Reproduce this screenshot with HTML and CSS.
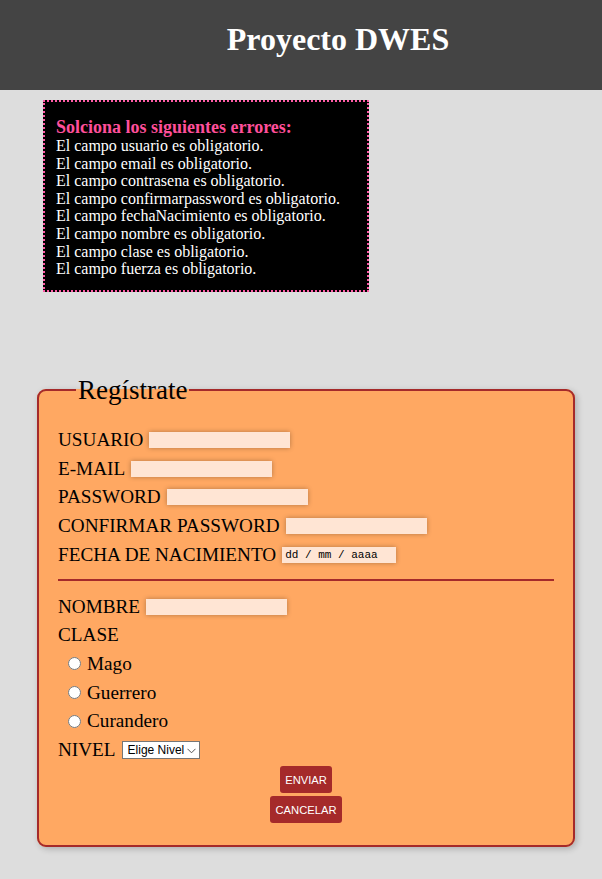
FILE: index.html
```html
<!DOCTYPE html>
<html lang="es">
<head>
<meta charset="utf-8">
<title>Proyecto DWES</title>
<link rel="stylesheet" href="styles.css">
</head>
<body>
<header class="site-header">
  <h1 class="site-title">Proyecto DWES</h1>
</header>

<div class="errors">
  <h3 class="errors-title">Solciona los siguientes errores:</h3>
  <div class="error-line">El campo usuario es obligatorio.</div>
  <div class="error-line">El campo email es obligatorio.</div>
  <div class="error-line">El campo contrasena es obligatorio.</div>
  <div class="error-line">El campo confirmarpassword es obligatorio.</div>
  <div class="error-line">El campo fechaNacimiento es obligatorio.</div>
  <div class="error-line">El campo nombre es obligatorio.</div>
  <div class="error-line">El campo clase es obligatorio.</div>
  <div class="error-line">El campo fuerza es obligatorio.</div>
</div>

<form class="register">
  <fieldset class="register-box">
    <legend class="register-legend">Regístrate</legend>
    <div class="row"><label for="usuario">USUARIO</label><input class="field" type="text" id="usuario"></div>
    <div class="row"><label for="email">E-MAIL</label><input class="field" type="text" id="email"></div>
    <div class="row"><label for="password">PASSWORD</label><input class="field" type="password" id="password"></div>
    <div class="row"><label for="confirm">CONFIRMAR PASSWORD</label><input class="field" type="password" id="confirm"></div>
    <div class="row"><label for="fecha">FECHA DE NACIMIENTO</label><input class="field date" type="text" id="fecha" placeholder="dd / mm / aaaa"></div>
    <hr class="divider">
    <div class="row"><label for="nombre">NOMBRE</label><input class="field" type="text" id="nombre"></div>
    <div class="row"><span>CLASE</span></div>
    <div class="row radio-row"><input type="radio" name="clase" id="mago"><label for="mago">Mago</label></div>
    <div class="row radio-row"><input type="radio" name="clase" id="guerrero"><label for="guerrero">Guerrero</label></div>
    <div class="row radio-row"><input type="radio" name="clase" id="curandero"><label for="curandero">Curandero</label></div>
    <div class="row"><label for="nivel">NIVEL</label>
      <span class="select-wrap">
        <select id="nivel" class="select"><option>Elige Nivel</option></select>
        <svg class="chev" width="9" height="6" viewBox="0 0 9 6"><path d="M0.5 0.8 L4.5 4.8 L8.5 0.8" fill="none" stroke="#555" stroke-width="1"/></svg>
      </span>
    </div>
    <div class="actions">
      <button type="submit" class="btn">ENVIAR</button>
      <button type="reset" class="btn">CANCELAR</button>
    </div>
  </fieldset>
</form>
</body>
</html>
```

FILE: styles.css
```css
html, body {
  margin: 0;
  padding: 0;
}
body {
  background: #dddddd;
  font-family: "Liberation Serif", "Times New Roman", serif;
  color: #000;
}
.site-header {
  background: #444444;
  height: 90px;
  padding-left: 74px;
  box-sizing: border-box;
  overflow: hidden;
}
.site-title {
  margin: 21px 0 0;
  text-align: center;
  color: #ffffff;
  font-size: 32px;
  font-weight: bold;
}
.errors {
  margin: 10px 0 0 43px;
  width: 326px;
  box-sizing: border-box;
  background: #000;
  border: 2px dotted #ff5aa5;
  padding: 15px 11px 12px;
  color: #fff;
  font-size: 16px;
}
.errors-title {
  margin: 0 0 -1px;
  color: #ff4f9a;
  font-size: 18px;
  font-weight: bold;
}
.error-line {
  line-height: 17.6px;
}
.register {
  margin: 83px 27px 0 37px;
  padding-bottom: 31px;
}
.register-box {
  margin: 0;
  border: 2px solid #a52a2a;
  border-radius: 9px;
  background: #ffa862;
  padding: 20px 19px 22px;
  box-shadow: 2px 2px 6px rgba(0,0,0,0.22);
}
.register-legend {
  margin-left: 18px;
  padding: 0 2px;
  font-size: 27px;
}
.row {
  display: flex;
  align-items: center;
  gap: 6px;
  height: 28.7px;
  font-size: 19.2px;
}
.field {
  width: 141px;
  height: 16px;
  box-sizing: border-box;
  border: none;
  background: #ffe5d4;
  box-shadow: 0 0 5px rgba(0,0,0,0.3);
  padding: 0 3px;
  font-size: 13px;
}
.date {
  width: 114px;
  font-family: "Liberation Mono", "Courier New", monospace;
  font-size: 11px;
}
.date::placeholder {
  color: #000;
}
.divider {
  border: none;
  height: 2px;
  background: #a52a2a;
  margin: 10px 0 11px;
}
.radio-row {
  gap: 0;
  padding-left: 5px;
}
.radio-row input {
  margin: 0 6px 0 5px;
  width: 13px;
  height: 13px;
}
.select-wrap {
  position: relative;
  display: inline-block;
  height: 18px;
}
.select {
  appearance: none;
  -webkit-appearance: none;
  width: 78px;
  height: 18px;
  box-sizing: border-box;
  border: 1px solid #767676;
  border-radius: 0;
  background: #fff;
  padding: 0 0 0 5px;
  font-family: "Liberation Sans", Arial, sans-serif;
  font-size: 12px;
  color: #000;
  display: block;
}
.chev {
  position: absolute;
  right: 4px;
  top: 7px;
  pointer-events: none;
}
.actions {
  display: flex;
  flex-direction: column;
  align-items: center;
  gap: 3px;
  margin-top: 2px;
}
.btn {
  background: #a52a2a;
  color: #fff;
  border: none;
  border-radius: 3px;
  font-family: "Liberation Sans", Arial, sans-serif;
  font-size: 11.2px;
  line-height: 14px;
  padding: 6.5px 5.5px;
  margin: 0;
}
```
